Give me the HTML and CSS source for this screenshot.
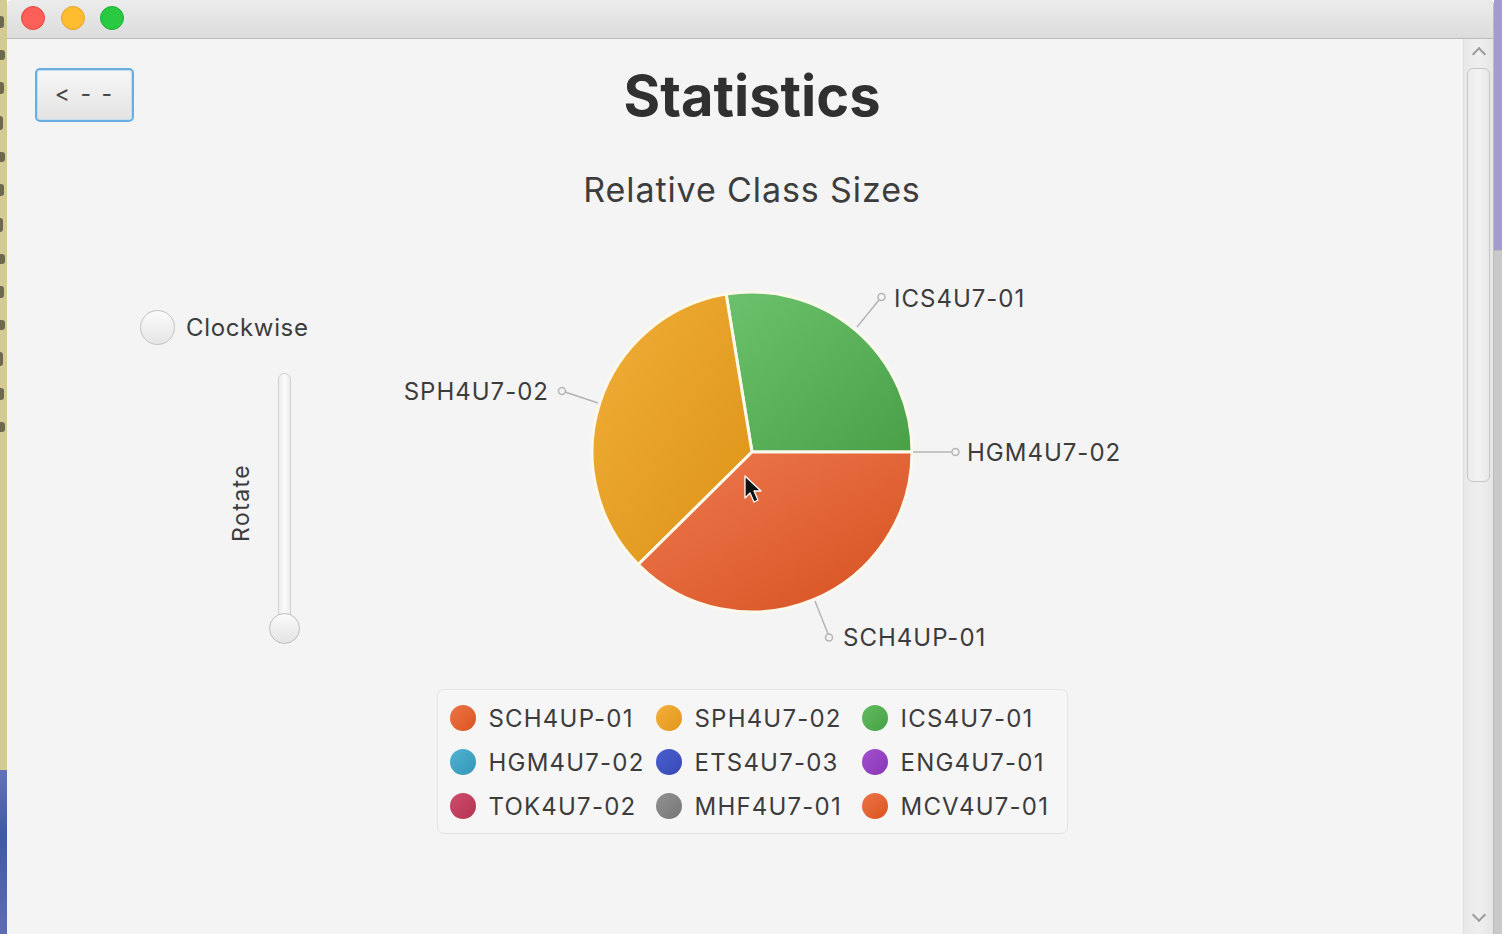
FILE: index.html
```html
<!DOCTYPE html>
<html lang="en">
<head>
<meta charset="utf-8">
<title>Statistics</title>
<link rel="stylesheet" href="styles.css">
</head>
<body>
<div class="screen">
  <div class="desk-left">
    <div class="desk-left-top">
      <span class="mark m1"></span><span class="mark m2"></span><span class="mark m1"></span><span class="mark m3"></span><span class="mark m2"></span><span class="mark m1"></span><span class="mark m3"></span><span class="mark m2"></span><span class="mark m1"></span><span class="mark m2"></span><span class="mark m3"></span><span class="mark m1"></span><span class="mark m2"></span>
    </div>
    <div class="desk-left-bottom"></div>
  </div>
  <div class="window">
    <div class="titlebar">
      <span class="light red"></span>
      <span class="light yellow"></span>
      <span class="light green"></span>
    </div>
    <div class="window-body">
      <main class="content">
        <header class="header">
          <button class="back-btn">&lt; - -</button>
          <h1 class="title">Statistics</h1>
          <div></div>
        </header>
        <h2 class="chart-title">Relative Class Sizes</h2>
        <section class="chart-row">
          <div class="controls">
            <label class="radio">
              <span class="radio-circle"></span>
              <span class="radio-text">Clockwise</span>
            </label>
            <div class="slider-block">
              <span class="slider-label">Rotate</span>
              <div class="slider">
                <span class="slider-track"></span>
                <span class="slider-thumb"></span>
              </div>
            </div>
          </div>
          <svg class="pie" width="800" height="400" viewBox="0 0 800 400">
            <defs>
              <linearGradient id="gRed" x1="0" y1="0" x2="1" y2="1">
                <stop offset="0" stop-color="#ee7a50"/>
                <stop offset="1" stop-color="#d6501f"/>
              </linearGradient>
              <linearGradient id="gYel" x1="0" y1="0" x2="1" y2="1">
                <stop offset="0" stop-color="#f1ae38"/>
                <stop offset="1" stop-color="#dc9316"/>
              </linearGradient>
              <linearGradient id="gGrn" x1="0" y1="0" x2="1" y2="1">
                <stop offset="0" stop-color="#6cc26c"/>
                <stop offset="1" stop-color="#49a047"/>
              </linearGradient>
            </defs>
            <g stroke="#fbf8ec" stroke-width="3" stroke-linejoin="round">
              <path d="M400,190 L560,190 A160,160 0 0 0 374.1,32.1 Z" fill="url(#gGrn)"/>
              <path d="M400,190 L374.1,32.1 A160,160 0 0 0 286.3,302.5 Z" fill="url(#gYel)"/>
              <path d="M400,190 L286.3,302.5 A160,160 0 0 0 560,190 Z" fill="url(#gRed)"/>
            </g>
            <g stroke="#b5b5b5" stroke-width="1.5" fill="none">
              <line x1="505" y1="65" x2="527" y2="38"/>
              <circle cx="529.5" cy="35" r="3.5"/>
              <line x1="561" y1="190" x2="600" y2="190"/>
              <circle cx="603.5" cy="190" r="3.5"/>
              <line x1="246" y1="141" x2="213" y2="130"/>
              <circle cx="210" cy="129" r="3.5"/>
              <line x1="463" y1="339" x2="476" y2="372"/>
              <circle cx="477" cy="375.5" r="3.5"/>
            </g>
            <g class="pie-labels">
              <text x="542" y="44.5">ICS4U7-01</text>
              <text x="615" y="198.5">HGM4U7-02</text>
              <text x="197" y="137.5" text-anchor="end">SPH4U7-02</text>
              <text x="491" y="383.5">SCH4UP-01</text>
            </g>
            <path class="cursor" d="M393,214 L393,236 L398,231 L402,240 L406,238 L402,229 L409,229 Z" fill="#111" stroke="#fff" stroke-width="1.3" stroke-linejoin="round"/>
          </svg>
          <div></div>
        </section>
        <div class="legend">
          <div class="legend-item"><span class="dot c0"></span>SCH4UP-01</div>
          <div class="legend-item"><span class="dot c1"></span>SPH4U7-02</div>
          <div class="legend-item"><span class="dot c2"></span>ICS4U7-01</div>
          <div class="legend-item"><span class="dot c3"></span>HGM4U7-02</div>
          <div class="legend-item"><span class="dot c4"></span>ETS4U7-03</div>
          <div class="legend-item"><span class="dot c5"></span>ENG4U7-01</div>
          <div class="legend-item"><span class="dot c6"></span>TOK4U7-02</div>
          <div class="legend-item"><span class="dot c7"></span>MHF4U7-01</div>
          <div class="legend-item"><span class="dot c0"></span>MCV4U7-01</div>
        </div>
      </main>
      <aside class="scrollbar">
        <span class="arrow up"></span>
        <div class="track"><span class="thumb"></span></div>
        <span class="arrow down"></span>
      </aside>
    </div>
  </div>
  <div class="desk-right">
    <div class="desk-right-top"></div>
    <div class="desk-right-bottom"></div>
  </div>
</div>
</body>
</html>
```

FILE: styles.css
```css
* { box-sizing: border-box; }

html, body {
  margin: 0;
  padding: 0;
  width: 1502px;
  height: 934px;
  overflow: hidden;
  font-family: "Inter", "Liberation Sans", sans-serif;
  color: #3b3b3b;
}

.screen {
  display: flex;
  width: 1502px;
  height: 934px;
}

/* desktop slivers at the edges */
.desk-left {
  width: 7px;
  display: flex;
  flex-direction: column;
}
.desk-left-top {
  height: 770px;
  background: #d3cb92;
  display: flex;
  flex-direction: column;
  gap: 22px;
  padding-top: 16px;
  overflow: hidden;
}
.mark {
  display: block;
  height: 12px;
  background: #4a4838;
  border-radius: 0 3px 3px 0;
  opacity: 0.75;
}
.m1 { width: 4px; }
.m2 { width: 5px; height: 10px; }
.m3 { width: 3px; height: 14px; }
.desk-left-bottom {
  flex: 1;
  background: linear-gradient(180deg, #6273b8, #3f58a6 40%, #5d6cb4);
}

.desk-right {
  width: 8px;
  display: flex;
  flex-direction: column;
}
.desk-right-top {
  height: 250px;
  background: #a49ccf;
}
.desk-right-bottom {
  flex: 1;
  background: #c9c9c9;
  border-top: 1px solid #b9b9b9;
}

/* window */
.window {
  flex: 1;
  display: flex;
  flex-direction: column;
  background: #f4f4f4;
  border-radius: 5px 5px 0 0;
  overflow: hidden;
  border-right: 1px solid #bdbdbd;
}

.titlebar {
  height: 39px;
  flex: none;
  display: flex;
  align-items: center;
  gap: 15.5px;
  padding: 0 0 2px 14px;
  background: linear-gradient(180deg, #ececec 0%, #dcdcdc 100%);
  border-bottom: 1px solid #bcbcbc;
}
.light {
  width: 24px;
  height: 24px;
  border-radius: 50%;
}
.light.red { background: #fc5f57; border: 1px solid #e5483f; }
.light.yellow { background: #fdbd2e; border: 1px solid #e3a52a; }
.light.green { background: #29c941; border: 1px solid #1eae30; }

.window-body {
  flex: 1;
  display: flex;
  min-height: 0;
}

.content {
  flex: 1;
  padding-left: 34px;
  display: flex;
  flex-direction: column;
}

.header {
  display: grid;
  grid-template-columns: 1fr auto 1fr;
  align-items: start;
  padding-top: 29px;
}
.back-btn {
  justify-self: start;
  margin-left: -6px;
  width: 99px;
  height: 54px;
  border: 2px solid #69aee0;
  border-radius: 5px;
  background: linear-gradient(180deg, #f7f7f7, #e3e3e3);
  box-shadow: inset 0 0 0 1px #c9dcec;
  font-family: "Inter", "Liberation Sans", sans-serif;
  font-size: 23px;
  color: #444;
  letter-spacing: 2px;
  padding: 0 0 2px 0;
}
.title {
  margin: 0;
  font-size: 56px;
  font-weight: 700;
  line-height: 56px;
  color: #303030;
}

.chart-title {
  margin: 46px 0 0 0;
  text-align: center;
  font-size: 34px;
  font-weight: 400;
  line-height: 40px;
  letter-spacing: 0.9px;
  color: #3d3d3d;
}

.chart-row {
  display: grid;
  grid-template-columns: 1fr 800px 1fr;
  margin-top: 52px;
}

.controls {
  display: flex;
  flex-direction: column;
  padding-left: 99px;
  padding-top: 48px;
}
.radio {
  display: flex;
  align-items: center;
  gap: 11px;
}
.radio-circle {
  width: 35px;
  height: 35px;
  border-radius: 50%;
  border: 1.5px solid #c2c2c2;
  background: linear-gradient(180deg, #fbfbfb, #e5e5e5);
}
.radio-text {
  font-size: 24px;
  color: #3c3c3c;
  letter-spacing: 0.65px;
}

.slider-block {
  display: flex;
  align-items: center;
  margin-top: 28px;
  margin-left: 90px;
  gap: 16px;
}
.slider-label {
  writing-mode: vertical-rl;
  transform: rotate(180deg);
  font-size: 23px;
  line-height: 23px;
  color: #3c3c3c;
  letter-spacing: 1.4px;
  margin-bottom: 12px;
}
.slider {
  position: relative;
  width: 31px;
  height: 271px;
}
.slider-track {
  position: absolute;
  left: 9px;
  top: 0;
  bottom: 14px;
  width: 13px;
  border-radius: 7px;
  border: 1.5px solid #cfcfcf;
  background: linear-gradient(90deg, #ededed, #fafafa, #ededed);
}
.slider-thumb {
  position: absolute;
  left: 0;
  bottom: 0;
  width: 31px;
  height: 31px;
  border-radius: 50%;
  border: 1.5px solid #bdbdbd;
  background: linear-gradient(180deg, #fbfbfb, #e3e3e3);
}

.pie {
  display: block;
}
.pie-labels text {
  font-family: "Inter", "Liberation Sans", sans-serif;
  font-size: 24px;
  letter-spacing: 1px;
  fill: #3c3c3c;
}

.legend {
  align-self: center;
  margin-top: 27px;
  width: 631px;
  height: 145px;
  border: 1.5px solid #e3e3e3;
  border-radius: 7px;
  background: #f6f6f6;
  display: grid;
  grid-template-columns: 206px 206px 206px;
  grid-auto-rows: 26px;
  row-gap: 18px;
  padding: 15px 0 0 12px;
}
.legend-item {
  display: flex;
  align-items: center;
  gap: 13px;
  font-size: 24px;
  letter-spacing: 1.2px;
  color: #3c3c3c;
  white-space: nowrap;
}
.dot {
  width: 26px;
  height: 26px;
  border-radius: 50%;
  flex: none;
}
.c0 { background: linear-gradient(135deg, #ee7448, #d9541f); }
.c1 { background: linear-gradient(135deg, #f4b03c, #e0961a); }
.c2 { background: linear-gradient(135deg, #62bd62, #46a145); }
.c3 { background: linear-gradient(135deg, #4fb3d0, #3596b8); }
.c4 { background: linear-gradient(135deg, #4a60d0, #3648b5); }
.c5 { background: linear-gradient(135deg, #a24fd0, #8836b6); }
.c6 { background: linear-gradient(135deg, #d04c6d, #b33452); }
.c7 { background: linear-gradient(135deg, #929292, #767676); }

/* scrollbar */
.scrollbar {
  width: 30px;
  flex: none;
  display: flex;
  flex-direction: column;
  align-items: center;
  background: linear-gradient(90deg, #e8e8e8, #efefef 50%, #e6e6e6);
  border-left: 1px solid #e0e0e0;
}
.arrow {
  width: 10px;
  height: 10px;
  border-left: 2px solid #9a9a9a;
  border-top: 2px solid #9a9a9a;
  flex: none;
}
.arrow.up {
  transform: rotate(45deg);
  margin-top: 10px;
}
.arrow.down {
  transform: rotate(225deg);
  margin-bottom: 14px;
}
.track {
  flex: 1;
  width: 100%;
  padding: 9px 3px 0 3px;
}
.thumb {
  display: block;
  width: 23px;
  height: 414px;
  border-radius: 6px;
  border: 1.5px solid #c6c6c6;
  background: linear-gradient(90deg, #ececec, #f3f3f3 50%, #e8e8e8);
}
```
